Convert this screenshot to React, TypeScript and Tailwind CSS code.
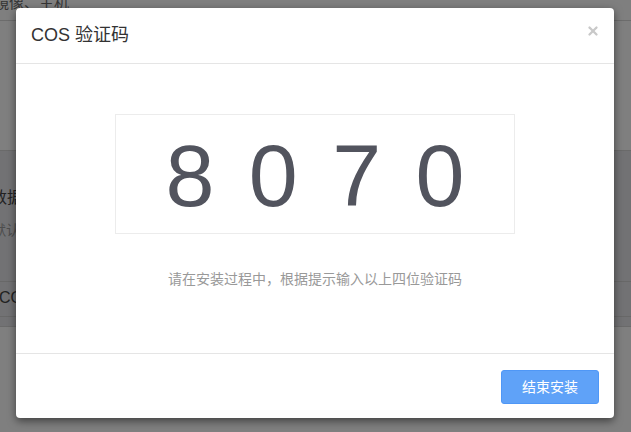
import { X } from 'lucide-react';

const code = ['8', '0', '7', '0'];

const App = () => {
  return (
    <div className="relative h-[432px] w-[631px] overflow-hidden bg-white font-['Liberation_Sans','Noto_Sans_CJK_SC',sans-serif]">
      {/* page behind the dialog */}
      <div className="h-[28px] border-b border-[#d8d8d8]">
        <p className="-mt-[7px] -ml-[6px] text-[15px] leading-[20px] text-[#6a6a6a]">镜像、主机</p>
      </div>
      <div className="h-[129px]" />
      <div className="h-[177px] border-y border-[#d4d4d4] bg-[#e4e5e8]">
        <p className="mt-[37px] -ml-[9px] text-[16px] leading-[20px] text-[#444]">数据</p>
        <p className="mt-[12px] -ml-[8px] text-[14px] leading-[20px] text-[#9a9a9a]">默认</p>
        <div className="mt-[41px] border-t border-[#d0d0d0]" />
        <p className="mt-[7px] -ml-[1px] text-[16px] leading-[18px] text-[#444]">CO</p>
        <div className="mt-[9px] border-t border-[#d0d0d0]" />
      </div>

      {/* overlay */}
      <div className="absolute inset-0 bg-black/50" />

      {/* dialog */}
      <div className="absolute left-[16px] top-[8px] flex h-[410px] w-[598px] flex-col rounded-[4px] bg-white shadow-[0_3px_9px_rgba(0,0,0,0.5)]">
        <div className="flex h-[56px] items-center justify-between border-b border-[#e5e5e5] pl-[15px] pr-[14px]">
          <h2 className="-mt-[1px] text-[18px] text-[#333]">COS 验证码</h2>
          <X aria-label="关闭" className="-mt-[9px] h-[14px] w-[14px] text-[#c9c9c9]" strokeWidth={4} />
        </div>

        <div className="flex h-[290px] flex-col items-center border-b border-[#e5e5e5] pt-[50px]">
          <div className="flex h-[120px] w-[400px] items-center justify-center border border-[#ececec]">
            <span className="mt-[4px] pl-[5px] text-[88px] leading-none tracking-[5px] text-[#52545e]">
              {code.join(' ')}
            </span>
          </div>
          <p className="mt-[35px] text-[14px] leading-[20px] text-[#999]">请在安装过程中，根据提示输入以上四位验证码</p>
        </div>

        <div className="flex flex-1 items-start justify-end pr-[15px] pt-[16px]">
          <button className="h-[34px] w-[98px] rounded-[3px] border border-[#4f97f6] bg-[#5fa2f8] text-[14px] text-white">
            结束安装
          </button>
        </div>
      </div>
    </div>
  );
};

export default App;
